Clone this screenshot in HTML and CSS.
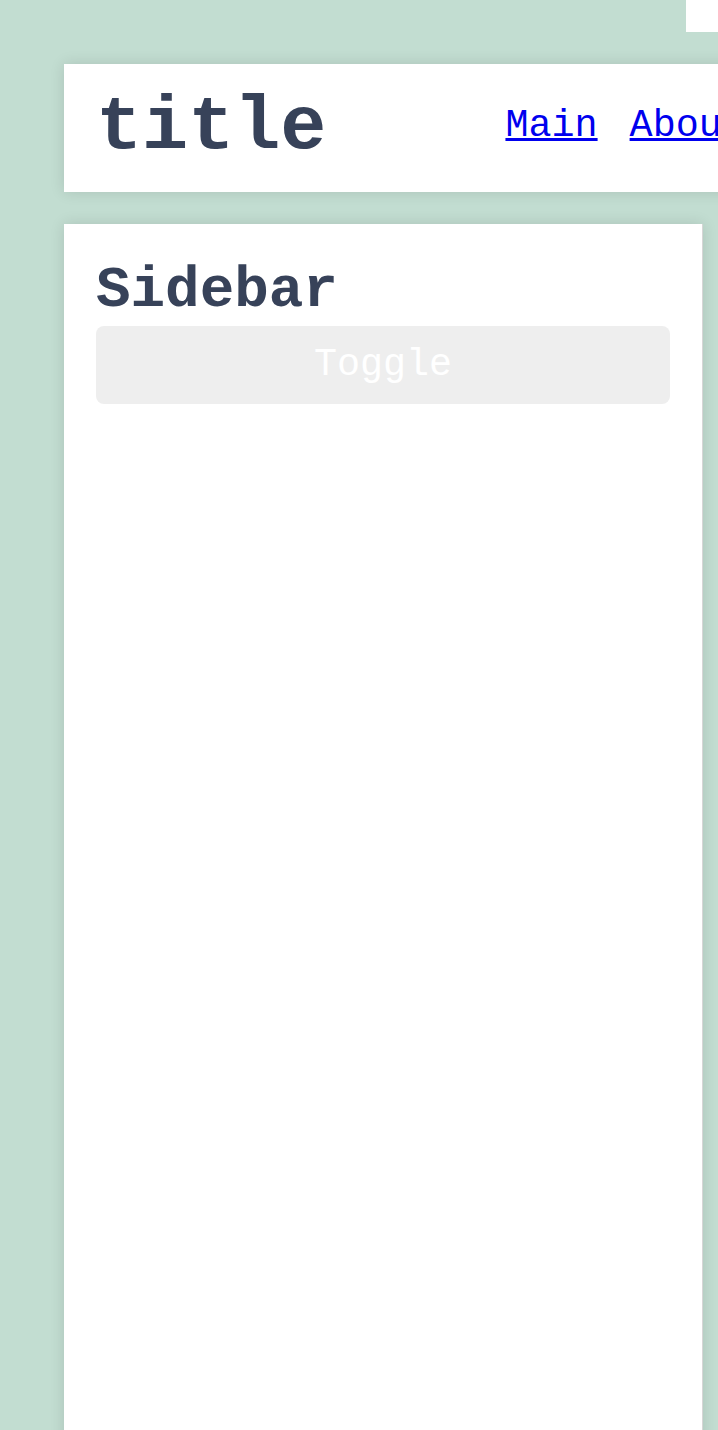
FILE: index.html
```html
<!DOCTYPE html>
<html>
<head>
<meta charset="utf-8">
<link rel="stylesheet" href="styles.css">
</head>
<body>
<div class="topbar"><div class="corner"></div></div>
<div class="page">
  <header class="header">
    <h1 class="title">title</h1>
    <nav class="nav">
      <a href="#">Main</a>
      <a href="#">About</a>
      <a href="#">Contact</a>
    </nav>
  </header>
  <div class="layout">
    <aside class="sidebar">
      <h2 class="side-title">Sidebar</h2>
      <button class="toggle">Toggle</button>
    </aside>
    <main class="main"></main>
  </div>
</div>
</body>
</html>
```
FILE: styles.css
```css
html, body {
  margin: 0;
  padding: 0;
  overflow: hidden;
}
body {
  background: #c2ddd1;
  font-family: "Liberation Mono", monospace;
  color: #374259;
  height: 1430px;
}
.topbar {
  height: 32px;
  display: flex;
  justify-content: flex-end;
}
.corner {
  width: 32px;
  height: 32px;
  background: #fff;
}
.page {
  padding: 32px 0 0 64px;
  width: 1400px;
  display: flex;
  flex-direction: column;
  gap: 32px;
}
.header {
  background: #fff;
  height: 128px;
  box-sizing: border-box;
  padding: 0 32px;
  display: flex;
  align-items: center;
  gap: 179px;
  box-shadow: 0 0 14px rgba(0, 0, 0, 0.12);
}
.title {
  margin: 0;
  font-size: 76.8px;
  font-weight: bold;
  line-height: 1;
}
.nav {
  display: flex;
  gap: 32px;
  font-size: 38.4px;
  margin-bottom: 4px;
}
.nav a {
  color: #0000ee;
}
.layout {
  display: flex;
  gap: 32px;
}
.sidebar {
  width: 639px;
  height: 1300px;
  box-sizing: border-box;
  background: #fff;
  border-right: 1px solid #d6d6d6;
  padding: 32px;
  box-shadow: 0 0 14px rgba(0, 0, 0, 0.12);
  display: flex;
  flex-direction: column;
}
.side-title {
  margin: 0;
  font-size: 57.6px;
  line-height: 70px;
  font-weight: bold;
}
.toggle {
  height: 78px;
  border: none;
  border-radius: 8px;
  background: #eeeeee;
  color: #ffffff;
  font-family: "Liberation Mono", monospace;
  font-size: 38.4px;
  width: 574px;
}
.main {
  flex: 1;
}
```
